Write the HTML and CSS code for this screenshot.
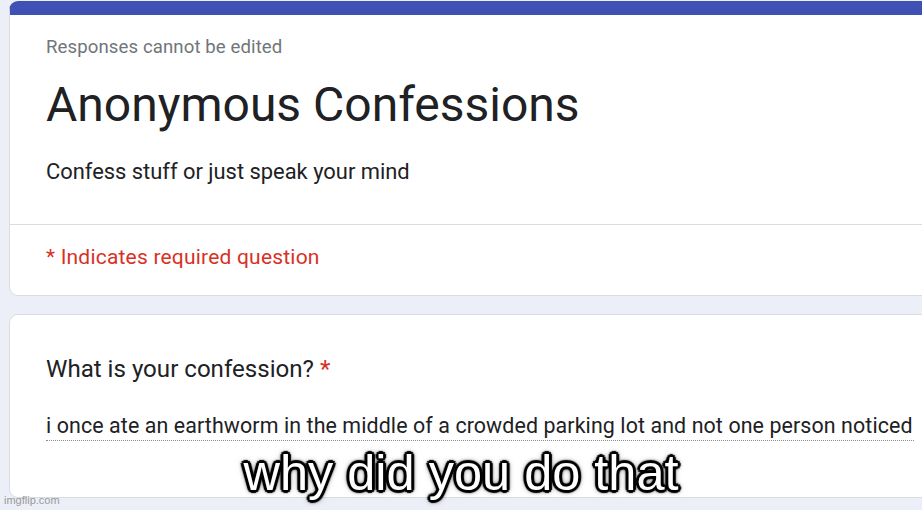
FILE: index.html
```html
<!DOCTYPE html>
<html>
<head>
<meta charset="utf-8">
<link rel="stylesheet" href="styles.css">
</head>
<body>
<div class="page">
  <div class="card head-card">
    <div class="head-main">
      <div class="note">Responses cannot be edited</div>
      <h1 class="title">Anonymous Confessions</h1>
      <div class="desc">Confess stuff or just speak your mind</div>
    </div>
    <div class="head-foot">
      <div class="required">* Indicates required question</div>
    </div>
  </div>
  <div class="card q-card">
    <div class="question">What is your confession? <span class="star">*</span></div>
    <div class="answer">i once ate an earthworm in the middle of a crowded parking lot and not one person noticed</div>
  </div>
  <div class="caption">why did you do that</div>
  <div class="watermark">imgflip.com</div>
</div>
</body>
</html>
```
FILE: styles.css
```css
html, body {
  margin: 0;
  padding: 0;
}
body {
  background: #eceef8;
  width: 922px;
  height: 510px;
  overflow: hidden;
  font-family: Roboto, "Liberation Sans", sans-serif;
  color: #202124;
}
.page {
  position: relative;
  width: 922px;
  height: 510px;
  padding: 1px 0 0 9px;
  box-sizing: border-box;
  display: flex;
  flex-direction: column;
  gap: 18px;
  overflow: hidden;
}
.card {
  width: 1000px;
  flex: none;
  background: #fff;
  border: 1px solid #dadce0;
  border-radius: 9px;
  box-sizing: border-box;
}
.head-card {
  border-top: 14px solid #3f51b5;
}
.head-main {
  padding: 19px 36px 38px;
  border-bottom: 1px solid #dadce0;
}
.note {
  font-size: 18.6px;
  line-height: 26px;
  color: #70757a;
  letter-spacing: 0.1px;
}
.title {
  margin: 17px 0 0;
  font-weight: 400;
  font-size: 48px;
  line-height: 56px;
}
.desc {
  margin-top: 25px;
  font-size: 21.9px;
  line-height: 28px;
}
.head-foot {
  padding: 18px 36px 24px;
}
.required {
  font-size: 21px;
  line-height: 28px;
  color: #d93025;
  letter-spacing: 0.2px;
}
.q-card {
  padding: 39px 36px 56px;
}
.question {
  font-size: 24.1px;
  line-height: 30px;
}
.star {
  color: #d93025;
}
.answer {
  margin-top: 28px;
  font-size: 21.4px;
  line-height: 28px;
  border-bottom: 1px dotted #8a8a8a;
  width: 868px;
  white-space: nowrap;
  letter-spacing: 0.1px;
}
.caption {
  position: absolute;
  left: 0;
  right: 0;
  top: 445px;
  text-align: center;
  font-family: "Liberation Sans", Arial, sans-serif;
  font-size: 50.5px;
  line-height: 56px;
  color: #fff;
  text-shadow:
    2px 2px 1px #000, -2px -2px 1px #000, 2px -2px 1px #000, -2px 2px 1px #000,
    0 3px 1px #000, 0 -3px 1px #000, 3px 0 1px #000, -3px 0 1px #000,
    0 0 5px #000, 0 0 7px rgba(0,0,0,0.6);
}
.watermark {
  position: absolute;
  left: 4px;
  top: 493px;
  font-family: "Liberation Sans", Arial, sans-serif;
  font-size: 11px;
  line-height: 14px;
  color: #9a9a9a;
}
```
